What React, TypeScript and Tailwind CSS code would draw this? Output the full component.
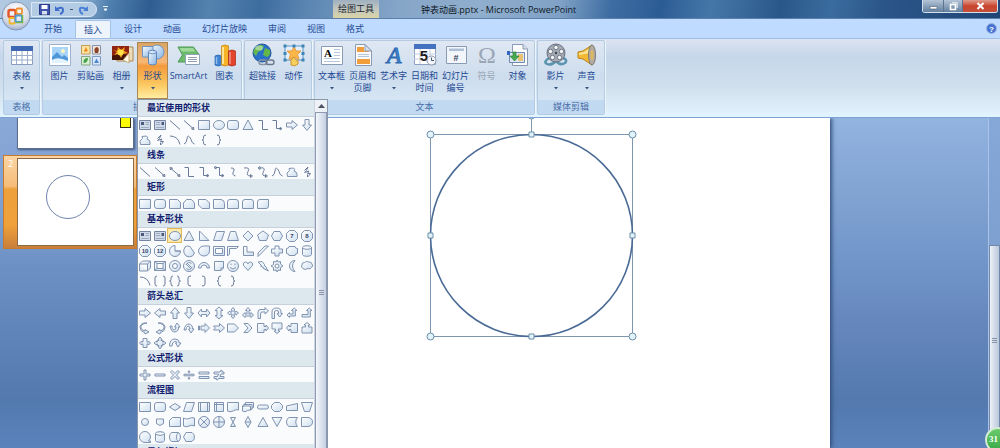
import React, { useState } from "react";

const GLYPHS: Record<string, string> = {
  rect: "M1.5 2.5H12.5V11.5H1.5Z",
  roundRect: "M4 2.5H10Q12.5 2.5 12.5 5V9Q12.5 11.5 10 11.5H4Q1.5 11.5 1.5 9V5Q1.5 2.5 4 2.5Z",
  ellipse: "M1.5 7A5.5 4.5 0 1 1 12.5 7A5.5 4.5 0 1 1 1.5 7Z",
  triangle: "M7 2L12 11.5H2Z",
  rightTriangle: "M2.5 2V11.5H12Z",
  arrowR: "M1.5 5H7V2.5L12.5 7L7 11.5V9H1.5Z",
  arrowL: "M12.5 5H7V2.5L1.5 7L7 11.5V9H12.5Z",
  arrowU: "M5 12.5V7H2.5L7 1.5L11.5 7H9V12.5Z",
  arrowD: "M5 1.5V7H2.5L7 12.5L11.5 7H9V1.5Z",
  freeform: "M2.5 11.5L2 8L4.5 5.5L4 3.5L8.5 3Q10.5 4 9 6Q11.5 6.5 12 9V11.5Z",
  snipOne: "M1.5 2.5H9.5L12.5 5.5V11.5H1.5Z",
  snipTwo: "M4.5 2.5H9.5L12.5 6V11.5H1.5V6Z",
  snipDiag: "M1.5 2.5H9L12.5 6V11.5H5L1.5 8Z",
  roundOne: "M1.5 2.5H9Q12.5 3 12.5 6.5V11.5H1.5Z",
  roundTwo: "M4 2.5H10Q12.5 2.5 12.5 5V11.5H1.5V5Q1.5 2.5 4 2.5Z",
  roundDiag: "M4 2.5H12.5V9Q12.5 11.5 10 11.5H1.5V5Q1.5 2.5 4 2.5Z",
  parallelogram: "M4.5 2.5H12.5L9.5 11.5H1.5Z",
  trapezoid: "M4.5 2.5H9.5L12.5 11.5H1.5Z",
  diamond: "M7 2L12 7L7 12L2 7Z",
  pentagon: "M7 2L12.5 6L10.5 11.5H3.5L1.5 6Z",
  hexagon: "M4 2.5H10L12.5 7L10 11.5H4L1.5 7Z",
  octagon: "M4.5 1.5H9.5L12.5 4.5V9.5L9.5 12.5H4.5L1.5 9.5V4.5Z",
  pie: "M7 7V1.5A5.5 5.5 0 1 0 12.5 7ZM7 7H12.5",
  chord: "M3 3A5 5 0 0 1 8 2.5L12.5 9A5.5 5.5 0 0 1 2 9Q1 6 3 3Z",
  teardrop: "M12.5 2V7A5.5 5 0 1 1 7 2Z",
  frame: "M1.5 2.5H12.5V11.5H1.5ZM3.5 4.5V9.5H10.5V4.5Z",
  halfFrame: "M1.5 2.5H12.5L10.5 4.5H3.5V10L1.5 12Z",
  ell: "M2.5 2.5H6V8H12.5V11.5H2.5Z",
  stripe: "M2 9L9 2H12.5L2 12.5Z",
  cross: "M5 2H9V5H12.5V9H9V12H5V9H1.5V5H5Z",
  plaque: "M4 2.5H10Q10 4.5 12.5 4.5V9.5Q10 9.5 10 11.5H4Q4 9.5 1.5 9.5V4.5Q4 4.5 4 2.5Z",
  can: "M2.5 3.5A4.5 1.8 0 0 1 11.5 3.5V10.5A4.5 1.8 0 0 1 2.5 10.5ZM2.5 3.5A4.5 1.8 0 0 0 11.5 3.5",
  cube: "M1.5 5L4.5 2H12.5V9L9.5 12H1.5ZM1.5 5H9.5V12M9.5 5L12.5 2",
  bevel: "M1.5 2.5H12.5V11.5H1.5ZM4 4.5H10V9.5H4ZM1.5 2.5L4 4.5M12.5 11.5L10 9.5M10 4.5L12.5 2.5M1.5 11.5L4 9.5",
  donut: "M1.5 7A5.5 5.5 0 1 1 12.5 7A5.5 5.5 0 1 1 1.5 7ZM4.5 7A2.5 2.5 0 1 0 9.5 7A2.5 2.5 0 1 0 4.5 7Z",
  forbid: "M1.5 7A5.5 5.5 0 1 1 12.5 7A5.5 5.5 0 1 1 1.5 7ZM4 6A3.3 3.3 0 0 1 9.5 4.5M10 8A3.3 3.3 0 0 1 4.5 9.5M4 5L9 10M5 4L10 9",
  blockArc: "M1.5 9A5.5 5.5 0 0 1 12.5 9H10A3 3 0 0 0 4 9Z",
  folded: "M2.5 2.5H11.5V9L9 11.5H2.5ZM11.5 9H9V11.5",
  smiley: "M1.5 7A5.5 5.5 0 1 1 12.5 7A5.5 5.5 0 1 1 1.5 7ZM4 8.5Q7 11.5 10 8.5M5 4.5V6M9 4.5V6",
  heart: "M7 11.5L2.5 6.5Q1.5 3.5 4.5 3Q6.5 3 7 5Q7.5 3 9.5 3Q12.5 3.5 11.5 6.5Z",
  bolt: "M2 3L6 2.5L8.5 5.5L8 6L10.5 8.5L10 9L12.5 12L7.5 9.5L8 9L4.5 7L5.5 6.5Z",
  sun: "M7 1L8 3L10.5 2.5L10.5 5L13 7L10.5 8.5L10.5 11.5L8 11L7 13L6 11L3.5 11.5L3.5 8.5L1 7L3.5 5.5L3.5 2.5L6 3ZM5 7A2 2 0 1 0 9 7A2 2 0 1 0 5 7Z",
  moon: "M10 1.5A5.5 5.5 0 1 0 10 12.5Q5 7 10 1.5Z",
  cloud: "M3 9.5Q0.5 8 2 6Q1.5 3.5 4.5 3.5Q6.5 1.5 8.5 3Q11.5 2.5 12 5Q13.5 7 11.5 8.5Q10.5 10.5 8 9.5Q5 11.5 3 9.5Z",
  arrowLR: "M1 7L4.5 3V5.5H9.5V3L13 7L9.5 11V8.5H4.5V11Z",
  arrowUD: "M7 1L11 4.5H9V9.5H11L7 13L3 9.5H5V4.5H3Z",
  quad: "M7 1.5L9 4H8V6H10V5L12.5 7L10 9V8H8V10H9L7 12.5L5 10H6V8H4V9L1.5 7L4 5V6H6V4H5Z",
  arrowLRU: "M7 1.5L9.5 4.5H8V8H10V6.5L12.5 9L10 11.5V10H4V11.5L1.5 9L4 6.5V8H6V4.5H4.5Z",
  bent: "M2 12.5V6Q2 3.5 5 3.5H9V1.5L12.5 5L9 8V6H6Q4.5 6 4.5 8V12.5Z",
  uturn: "M2 12.5V6Q2 2 6.5 2Q11 2 11 6V7.5H12.5L9.7 11L7 7.5H8.5V6Q8.5 4.5 6.5 4.5Q4.5 4.5 4.5 6V12.5Z",
  leftUp: "M2 9L4.5 6.5V8H8V4.5H6.5L9.2 2L12 4.5H10.3V10H4.5V11.5Z",
  bentUp: "M2 8.5H8V4.5H6.5L9.2 2L12 4.5H10.3V11H2Z",
  curveR: "M9 2Q2 3 3 7Q3 9 7 10V8.5L11 11L7 13V12Q1.5 10 2 6Q3 1 9 2Z",
  curveL: "M5 2Q12 3 11 7Q11 9 7 10V8.5L3 11L7 13V12Q12.5 10 12 6Q11 1 5 2Z",
  curveU: "M2 5Q3 11 7 11Q11 10 10.5 6H12L9 2L6.5 6H8Q8 9 6 9Q3 8 4 5Z",
  curveD: "M2 9Q3 3 7 3Q11 4 10.5 8H12L9 12L6.5 8H8Q8 5 6 5Q4 6 4 9Z",
  striped: "M1.5 5H2.5V9H1.5ZM4 5H8V2.5L12.5 7L8 11.5V9H4Z",
  notched: "M1.5 5H7.5V2.5L12.5 7L7.5 11.5V9H1.5L3.5 7Z",
  homePlate: "M1.5 3H8.5L12.5 7L8.5 11H1.5Z",
  chevron: "M3 2.5H7L11 7L7 11.5H3L7 7Z",
  callR: "M1.5 2.5H8V5.5H10V4L12.5 7L10 10V8.5H8V11.5H1.5Z",
  callD: "M2 2H12V8H8.5V10H10L7 12.5L4 10H5.5V8H2Z",
  callL: "M12.5 2.5H6V5.5H4V4L1.5 7L4 10V8.5H6V11.5H12.5Z",
  callU: "M2 12V6H5.5V4H4L7 1.5L10 4H8.5V6H12V12Z",
  callLR: "M1.5 7L3.5 5V6H5V2.5H9V6H10.5V5L12.5 7L10.5 9V8H9V11.5H5V8H3.5V9Z",
  callQuad: "M7 1L9 3.5H8V4.5H9.5V6H10.5V5L13 7L10.5 9V8H9.5V9.5H8V10.5H9L7 13L5 10.5H6V9.5H4.5V8H3.5V9L1 7L3.5 5V6H4.5V4.5H6V3.5H5Z",
  circular: "M1.5 10Q1.5 3 7 3Q11 3 11.5 7H13L10 11L7.5 7H9Q8.5 5 6.5 5.5Q4 6 4 10Z",
  plus: "M6 2H8V6H12V8H8V12H6V8H2V6H6Z",
  minus: "M2 6H12V8H2Z",
  times: "M4 2.5L7 5.5L10 2.5L11.5 4L8.5 7L11.5 10L10 11.5L7 8.5L4 11.5L2.5 10L5.5 7L2.5 4Z",
  divide: "M2 6.2H12V7.8H2ZM6.3 3H7.7V4.4H6.3ZM6.3 9.6H7.7V11H6.3Z",
  equal: "M2 4H12V6H2ZM2 8.5H12V10.5H2Z",
  notEqual: "M2 4H8L9 2L10.5 3L10 4H12V6H9L8 8.5H12V10.5H6.5L5.5 12L4 11.5L4.5 10.5H2V8.5H5.5L6.5 6H2Z",
  decision: "M7 3.5L12.5 7L7 10.5L1.5 7Z",
  predefined: "M1.5 2.5H12.5V11.5H1.5ZM3.5 2.5V11.5M10.5 2.5V11.5",
  internal: "M2.5 2.5H11.5V11.5H2.5ZM4.5 2.5V11.5M2.5 4.5H11.5",
  document: "M1.5 2.5H12.5V10Q10 9 7 11Q4 12.5 1.5 11Z",
  multiDoc: "M4.5 2.5H12.5V7.5L11 8V9L9.5 10Q6 10 5 11.5Q3 12 1.5 11V6H3V4H4.5ZM3 4.5H11V8.5M1.5 6H9.5V10",
  terminator: "M3.5 5H10.5Q12.5 5 12.5 7T10.5 9H3.5Q1.5 9 1.5 7T3.5 5Z",
  prep: "M4.5 2.5H9.5L12.5 5.5V8.5L9.5 11.5H4.5L1.5 8.5V5.5Z",
  manualInput: "M1.5 6L12.5 3.5V10.5H1.5Z",
  manualOp: "M1.5 2.5H12.5L9.5 11.5H4.5Z",
  connector: "M3.5 7A3.5 3.5 0 1 1 10.5 7A3.5 3.5 0 1 1 3.5 7Z",
  offPage: "M3.5 4H10.5V8.5L7 10.5L3.5 8.5Z",
  card: "M4.5 2.5H12.5V11.5H1.5V5.5Z",
  tape: "M1.5 3Q4 5 7 3.5T12.5 3V11Q10 9.5 7 11T1.5 11Z",
  summing: "M1.5 7A5.5 5.5 0 1 1 12.5 7A5.5 5.5 0 1 1 1.5 7ZM3 3L11 11M11 3L3 11",
  or: "M1.5 7A5.5 5.5 0 1 1 12.5 7A5.5 5.5 0 1 1 1.5 7ZM7 1.5V12.5M1.5 7H12.5",
  collate: "M4.5 2.5H9.5L4.5 11.5H9.5Z",
  sort: "M7 1.5L10 7L7 12.5L4 7ZM4 7H10",
  extract: "M7 2.5L12 11.5H2Z",
  merge: "M2 2.5H12L7 11.5Z",
  stored: "M4 2.5H12.5Q9 7 12.5 11.5H4Q1.5 10.5 1.5 7T4 2.5Z",
  delay: "M1.5 2.5H8Q12.5 3 12.5 7T8 11.5H1.5Z",
  sequential: "M7 1.5A5.5 5.5 0 1 0 7 12.5H12.5V11H10.5Q12.5 9 12.5 7A5.5 5.5 0 0 0 7 1.5Z",
  direct: "M3.5 2.5H10.5Q12.5 4 12.5 7T10.5 11.5H3.5Q1.5 10 1.5 7T3.5 2.5ZM10.5 2.5Q8.5 4 8.5 7T10.5 11.5",
  display: "M4 2.5H10Q12.5 4 12.5 7T10 11.5H4L1.5 7Z",
};

const STROKES: Record<string, string> = {
  line: "M2 2.5L12 11.5",
  arrow: "M2 2.5L11 10.5M12 11.5L9.5 11L11.5 9Z",
  arrowBoth: "M3 3.5L11 10.5M12 11.5L9.5 11L11.5 9ZM2 2.5L4.5 3L2.5 5Z",
  elbow: "M2.5 2.5H6.5V11.5H12",
  elbowArrow: "M2.5 2.5H6.5V10.5H11M10 9.5L12 10.5L10 12Z",
  elbowBoth: "M4 2.5H7.5V10.5H11M10 9.5L12 10.5L10 12ZM4 1.5L2 2.5L4 4Z",
  curve: "M5 3Q9.5 3 7.5 6.5T9.5 11",
  curveArrow: "M3 3Q9.5 2 7 6.5T10 11M9.5 9.5L11.5 11L9.5 12.5Z",
  curveBoth: "M4 3Q10 2 7.5 6.5T10 11M9.5 9.5L11.5 11L9.5 12.5ZM4 1.5L2 3L4 4.5Z",
  wave: "M2 11Q4.5 10.5 5 6T7.5 4T9.5 8T12.5 11",
  scribble: "M4.5 5.5L8 2L6.5 5.500L4.500 7.500L9 6L7.500 8.500L10.500 8.500L9 10.500L7.500 12V9.500",
  arc: "M2 3Q10 3 12 11.5",
  bracketL: "M9 2Q6 2 6 4V10Q6 12 9 12",
  bracketR: "M5 2Q8 2 8 4V10Q8 12 5 12",
  braceL: "M9 2Q6.5 2 6.5 4V5.5Q6.5 7 5 7Q6.5 7 6.5 8.5V10Q6.5 12 9 12",
  braceR: "M5 2Q7.5 2 7.5 4V5.5Q7.5 7 9 7Q7.5 7 7.5 8.5V10Q7.5 12 5 12",
  bracketPair: "M4 2Q2 2 2 4V10Q2 12 4 12M10 2Q12 2 12 4V10Q12 12 10 12",
  bracePair: "M5 2Q3 2 3 4V5.5Q3 7 1.5 7Q3 7 3 8.5V10Q3 12 5 12M9 2Q11 2 11 4V5.5Q11 7 12.5 7Q11 7 11 8.5V10Q11 12 9 12",
};

const sections = [
  {
    title: "最近使用的形状",
    items: "textbox vtextbox line arrow rect ellipse roundRect triangle elbow elbowArrow arrowR arrowD freeform scribble arc wave braceL braceR",
  },
  {
    title: "线条",
    items: "line arrow arrowBoth elbow elbowArrow elbowBoth curve curveArrow curveBoth wave freeform scribble",
  },
  {
    title: "矩形",
    items: "rect roundRect snipOne snipTwo snipDiag roundOne roundTwo roundTwo roundDiag",
  },
  {
    title: "基本形状",
    picked: 2,
    items: "textbox vtextbox ellipse triangle rightTriangle parallelogram trapezoid diamond pentagon hexagon poly7 poly8 poly10 poly12 pie chord teardrop frame halfFrame ell stripe cross plaque can cube bevel donut forbid blockArc folded smiley heart bolt sun moon cloud arc bracketPair bracePair bracketL bracketR braceL braceR",
  },
  {
    title: "箭头总汇",
    items: "arrowR arrowL arrowU arrowD arrowLR arrowUD quad arrowLRU bent uturn leftUp bentUp curveR curveL curveU curveD striped notched homePlate chevron callR callD callL callU callLR callQuad circular",
  },
  {
    title: "公式形状",
    items: "plus minus times divide equal notEqual",
  },
  {
    title: "流程图",
    items: "rect roundRect decision parallelogram predefined internal document multiDoc terminator prep manualInput manualOp connector offPage card tape summing or collate sort extract merge stored delay sequential can direct display",
  },
  { title: "星与旗帜", items: "" },
];

const Glyph = ({ name }: { name: string }) => {
  if (name === "textbox" || name === "vtextbox") {
    const flip = name === "vtextbox";
    return (
      <svg width="14" height="14" viewBox="0 0 14 14" fill="none">
        <path d="M1.5 2.5H12.5V11.5H1.5Z" fill="#cfd9e7" stroke="#7686a2" />
        <path d={flip ? "M3 4.5H7M3 6.5H7M3 9.5H11" : "M7.5 4.5H11M7.5 6.5H11M3 9.5H11"} stroke="#9eabc2" />
        <path d={flip ? "M8.5 4H11V7H8.5Z" : "M3 4H6V7H3Z"} fill="#4a5a7c" />
      </svg>
    );
  }
  const sides = name.startsWith("poly") ? name.slice(4) : "";
  const solid = sides ? GLYPHS.octagon : GLYPHS[name];
  return (
    <svg width="14" height="14" viewBox="0 0 14 14" strokeLinejoin="round">
      <path
        d={solid || STROKES[name]}
        fill={solid ? "url(#shapeFill)" : "none"}
        fillRule="evenodd"
        stroke={solid ? "#8093b0" : "#6a7b9a"}
        strokeWidth="1"
      />
      {sides && (
        <text x="7" y="9" textAnchor="middle" fontSize="6" fontWeight="700" fill="#33456b" fontFamily="Liberation Sans, sans-serif">
          {sides}
        </text>
      )}
    </svg>
  );
};

const Grip = () => (
  <span className="flex flex-col gap-px">
    <i className="block h-px w-[5px] bg-[#8592a8]" />
    <i className="block h-px w-[5px] bg-[#8592a8]" />
    <i className="block h-px w-[5px] bg-[#8592a8]" />
  </span>
);

const ShapeMenu = () => {
  return (
    <div className="absolute left-0 top-full z-20 flex h-[374px] w-[191px] border border-[#8a97ab] bg-[#fafbfd]">
      <svg width="0" height="0" className="absolute">
        <defs>
          <linearGradient id="shapeFill" x1="0" y1="0" x2="1" y2="1">
            <stop offset="0" stopColor="#ffffff" />
            <stop offset="1" stopColor="#cfe0f0" />
          </linearGradient>
        </defs>
      </svg>
      <div className="min-w-0 flex-1 overflow-hidden">
        {sections.map((section) => (
          <section key={section.title}>
            <h3 className="h-[17px] border-b border-[#c5d0da] bg-[#dde7ee] pl-[9px] text-[9px] font-bold leading-[16px] text-[#10206e]">
              {section.title}
            </h3>
            <div className="grid grid-cols-12">
              {section.items.split(" ").filter(Boolean).map((item, index) => (
                <button
                  key={index}
                  aria-label={item}
                  className={`flex h-[15px] items-center justify-center ${section.picked === index
                    ? "bg-[#fdeaa8] outline outline-1 -outline-offset-1 outline-[#e3b85c]"
                    : ""
                    }`}
                >
                  <Glyph name={item} />
                </button>
              ))}
            </div>
          </section>
        ))}
      </div>
      <div className="flex w-[13px] flex-col border-l border-[#cdd5e0] bg-[#eef1f6]">
        <div className="flex h-[12px] items-center justify-center">
          <svg width="7" height="4" viewBox="0 0 7 4"><path d="M3.5 0L7 4H0Z" fill="#4a5263" /></svg>
        </div>
        <div className="flex flex-1 items-center justify-center border border-[#8e9bb3] bg-linear-to-r from-[#f4f7fb] to-[#c6d0e2]">
          <Grip />
        </div>
      </div>
    </div>
  );
};

const TableIcon = () => (
  <svg width="24" height="24" viewBox="0 0 24 24">
    <path d="M1.5 3.5H22.5V21.5H1.5Z" fill="#fff" stroke="#8a9cc0" />
    <path d="M1 3H23V8H1Z" fill="#3c68b4" />
    <path d="M1 12.5H23M1 17H23M6.5 8V21M12 8V21M17.5 8V21" stroke="#9caecb" />
  </svg>
);

const PictureIcon = () => (
  <svg width="24" height="24" viewBox="0 0 24 24">
    <path d="M1.5 1.5H22.5V22.5H1.5Z" fill="#fff" stroke="#9fb2cc" />
    <path d="M4 4H20V20H4Z" fill="#a8d4f8" />
    <path d="M4 14L9 9L14 14L16 12L20 15V20H4Z" fill="#4f97d8" />
    <path d="M4 17Q10 13 20 18V20H4Z" fill="#e3f3fd" />
    <circle cx="15" cy="8" r="2" fill="#fff7c0" />
  </svg>
);

const ClipArtIcon = () => (
  <svg width="24" height="24" viewBox="0 0 24 24" strokeWidth="1">
    <path d="M2.5 2.5H11V11H2.5Z" fill="#fbe3a4" stroke="#c39c55" />
    <path d="M13.5 2.5H21.5V11H13.5Z" fill="#f2e6dc" stroke="#8994ab" />
    <path d="M2.5 13.5H11V22H2.5Z" fill="#d8efd2" stroke="#83a583" />
    <path d="M13.5 13.5H21.5V22H13.5Z" fill="#d9e9fa" stroke="#7f9bc4" />
    <path d="M5 8L7 4L9 8L6 9Z" fill="#ee8e1e" />
    <path d="M16 10Q14 5 18 4Q21 5 19 10Z" fill="#8a4428" />
    <path d="M4.5 20Q4 15 9 15Q9 20 4.5 20Z" fill="#49a04a" />
    <path d="M15 20L17.5 15.5L20 20Z" fill="#4f86cf" />
  </svg>
);

const AlbumIcon = () => (
  <svg width="24" height="24" viewBox="0 0 24 24">
    <path d="M7 4H23V18H7Z" fill="#eddcb8" stroke="#a98650" />
    <path d="M2 3H19V17H2Z" fill="#8f2411" />
    <path d="M2 13Q10 8 19 13V17H2Z" fill="#451508" />
    <path d="M3 7L7 8L8 4L11 7L15 4L14 8L18 10L13 11L11 15L9 11L4 12L7 9Z" fill="#f6a01c" />
    <circle cx="10.5" cy="9.5" r="3" fill="#fde14a" />
    <path d="M19 10L13 17L19 20Z" fill="#fffbe8" stroke="#b8935a" strokeWidth=".7" />
  </svg>
);

const ShapesIcon = () => (
  <svg width="24" height="24" viewBox="0 0 24 24">
    <defs>
      <linearGradient id="steel" x1="0" y1="0" x2="1" y2="1">
        <stop offset="0" stopColor="#f8fcff" />
        <stop offset="1" stopColor="#86b2e2" />
      </linearGradient>
    </defs>
    <circle cx="16" cy="9" r="7" fill="url(#steel)" stroke="#6d94c4" />
    <path d="M1.5 3.5H12V14H1.5Z" fill="url(#steel)" stroke="#6d94c4" />
    <path d="M7.5 9A4 1.7 0 0 1 15.5 9V20A4 1.9 0 0 1 7.5 20Z" fill="url(#steel)" stroke="#5d86ba" />
    <path d="M7.5 9A4 1.7 0 0 0 15.5 9" fill="none" stroke="#6d94c4" />
  </svg>
);

const SmartArtIcon = () => (
  <svg width="24" height="24" viewBox="0 0 24 24">
    <path d="M1 4H16.5L22 11.5L17 19H1L5.5 12Z" fill="#6cba6c" stroke="#4c9a54" />
    <path d="M2.5 5H16L18.5 8.5H4.5Z" fill="#9fda9a" />
    <path d="M8.5 11.5H22.5V21.5H8.5Z" fill="#fff" stroke="#8fa3b7" />
    <path d="M11 14.5H20M11 16.5H20M11 18.5H20" stroke="#90a0b0" />
  </svg>
);

const ChartIcon = () => (
  <svg width="24" height="24" viewBox="0 0 24 24">
    <path d="M2 13Q5 11 8.5 13V22Q5 24 2 22Z" fill="#3e83d6" stroke="#2560a8" strokeWidth=".7" />
    <path d="M8.5 3Q12 1 15.5 3V22Q12 24 8.5 22Z" fill="#f5b325" stroke="#c1800e" strokeWidth=".7" />
    <path d="M15.5 8Q19 6 22.5 8V22Q19 24 15.5 22Z" fill="#e2452b" stroke="#a62a18" strokeWidth=".7" />
    <path d="M10 4V21" stroke="#fde494" strokeWidth="2" />
    <path d="M3.5 14V21M17 9V21" stroke="#fff" strokeOpacity=".45" strokeWidth="1.5" />
  </svg>
);

const LinkIcon = () => (
  <svg width="24" height="24" viewBox="0 0 24 24" fill="none">
    <circle cx="11" cy="10" r="9" fill="#2870c8" stroke="#1d559b" />
    <path d="M4 5Q8 0 13 3L11 7L7 9L5 13L2.5 10Q2 7 4 5ZM14 5L19 7Q20 12 16 14L12 12Z" fill="#65b74a" />
    <ellipse cx="8" cy="5" rx="4" ry="2.5" fill="#fff" fillOpacity=".4" />
    <rect x="8" y="17" width="8" height="4.5" rx="2.2" stroke="#8b96a6" strokeWidth="1.6" />
    <rect x="15" y="17" width="8" height="4.5" rx="2.2" stroke="#6c7888" strokeWidth="1.4" />
  </svg>
);

const ActionIcon = () => (
  <svg width="24" height="24" viewBox="0 0 24 24">
    <path d="M3 3H21V17H3Z" fill="#e4eefa" stroke="#5796c8" />
    <path d="M12 3.5L14 8L19 8L15.5 11.5L17 16.500L12 14L7 16.500L8.500 11.500L5 8H10Z" fill="#fbb649" stroke="#e99a3a" />
    <path d="M9 17L12 14L14 17L16 18V21Q13 24 9 22Z" fill="#f7cf5c" stroke="#cf942e" />
    <path d="M1.5 1.5H4.5V4.5H1.5ZM10.5 1.5H13.5V4.5H10.5ZM19.5 1.5H22.5V4.5H19.5ZM1.5 9H4.5V12H1.5ZM19.5 9H22.5V12H19.5ZM1.5 15.5H4.5V18.5H1.5ZM19.5 15.5H22.5V18.5H19.5Z" fill="#3f83b4" />
  </svg>
);

const TextBoxIcon = () => (
  <svg width="24" height="24" viewBox="0 0 24 24">
    <path d="M1.5 3.5H22.5V21.5H1.5Z" fill="#fff" stroke="#8a9bb4" />
    <path d="M14 6.5H20M14 9.5H20M14 12.5H20M4 15.5H20M4 18.5H20" stroke="#b7c7de" />
    <text x="8" y="14" textAnchor="middle" fontSize="11" fontWeight="700" fontFamily="Liberation Serif, serif">A</text>
  </svg>
);

const HeaderIcon = () => (
  <svg width="24" height="24" viewBox="0 0 24 24">
    <path d="M4.5 1.5H14L20.5 8V22.5H4.5Z" fill="#f7f9fc" stroke="#8b9ab2" />
    <path d="M6 4H13V8H18V9H6ZM6 16H19V21H6Z" fill="#f29d3b" />
    <path d="M14 1.5V8H20.5Z" fill="#d7e1ee" stroke="#8b9ab2" />
    <path d="M7 11.5H18M7 13.5H18" stroke="#b8c5d7" />
  </svg>
);

const WordArtIcon = () => (
  <svg width="24" height="24" viewBox="0 0 24 24">
    <text x="12" y="20" textAnchor="middle" fontSize="24" fontStyle="italic" fill="#4284cc" stroke="#2f6ab2" strokeWidth="1" fontFamily="Liberation Serif, serif">A</text>
  </svg>
);

const DateIcon = () => (
  <svg width="24" height="24" viewBox="0 0 24 24">
    <path d="M1.5 1.5H22.5V21.5H1.5Z" fill="#fff" stroke="#8ea0c4" />
    <path d="M1 1H23V6H1Z" fill="#4472c0" />
    <path d="M1 11H23M1 16H23M7 6V21M17 6V21" stroke="#c3cee2" />
    <text x="11" y="18" textAnchor="middle" fontSize="15" fontWeight="700" fill="#1b1b1b" fontFamily="Liberation Sans, sans-serif">5</text>
    <circle cx="18.5" cy="17.5" r="4.5" fill="#f2f6fa" stroke="#8a96a8" />
    <path d="M18.5 14.5V17.5H21" fill="none" stroke="#4b5870" />
  </svg>
);

const NumberIcon = () => (
  <svg width="24" height="24" viewBox="0 0 24 24">
    <path d="M2.5 3.5H22.5V20.5H2.5Z" fill="#f2f6fb" stroke="#8a9bb4" />
    <path d="M5 5.5H20V8H5Z" fill="#aebfd8" />
    <text x="12" y="18" textAnchor="middle" fontSize="9" fontWeight="700" fill="#344058" fontFamily="Liberation Sans, sans-serif">#</text>
  </svg>
);

const SymbolIcon = () => (
  <svg width="24" height="24" viewBox="0 0 24 24">
    <text x="12" y="20" textAnchor="middle" fontSize="24" fill="#9ba6b5" fontFamily="Liberation Serif, serif">Ω</text>
  </svg>
);

const ObjectIcon = () => (
  <svg width="24" height="24" viewBox="0 0 24 24">
    <path d="M6.5 1.5H17L21.5 6V22.5H6.5Z" fill="#fbfcfe" stroke="#8b9ab2" />
    <path d="M17 1.5V6H21.5" fill="#d7e1ee" stroke="#8b9ab2" />
    <path d="M3.5 9.5H18.5V19.5H3.5Z" fill="#dce8f6" stroke="#7088b0" />
    <path d="M12 11H17V18H12Z" fill="#e8c173" />
    <path d="M1 8H4V12H1Z" fill="#3268bb" />
    <path d="M7 9H10V13H13L8.5 18L4 13H7Z" fill="#49a94f" stroke="#2f8438" strokeWidth=".7" />
  </svg>
);

const MovieIcon = () => (
  <svg width="24" height="24" viewBox="0 0 24 24">
    <path d="M5 15Q-1 19 3 21Q7 23 12 18Q16 23 21 20Q24 17 19 15" fill="none" stroke="#5c94b0" strokeWidth="2.5" />
    <circle cx="12" cy="10" r="9" fill="#a5abb4" stroke="#697180" />
    <g fill="#f5f8fb" stroke="#59616e" strokeWidth=".8">
      <circle cx="12" cy="4.5" r="2.2" />
      <circle cx="6.5" cy="8.5" r="2.2" />
      <circle cx="17.5" cy="8.5" r="2.2" />
      <circle cx="8.5" cy="14.5" r="2.2" />
      <circle cx="15.5" cy="14.5" r="2.2" />
    </g>
    <circle cx="12" cy="10" r="1.2" fill="#3d4552" />
  </svg>
);

const SoundIcon = () => (
  <svg width="24" height="24" viewBox="0 0 24 24">
    <path d="M3 9L8 8L17 2V22L8 16L3 15Z" fill="#f3b935" stroke="#b88418" />
    <path d="M4 10L9 9L15 5V10L4 12Z" fill="#fde593" />
    <ellipse cx="17" cy="12" rx="3.5" ry="10" fill="#b2aca4" stroke="#817a70" />
    <ellipse cx="17" cy="12" rx="1.5" ry="5" fill="#e0b95d" />
  </svg>
);

type Tool = {
  label: string;
  icon: () => React.ReactElement;
  second?: string;
  arrow?: boolean;
  wide?: boolean;
  off?: boolean;
};

const groups: { name: string; tight?: boolean; tools: Tool[] }[] = [
  { name: "表格", tools: [{ label: "表格", icon: TableIcon, arrow: true }] },
  {
    name: "插图",
    tight: true,
    tools: [
      { label: "图片", icon: PictureIcon },
      { label: "剪贴画", icon: ClipArtIcon },
      { label: "相册", icon: AlbumIcon, arrow: true },
      { label: "形状", icon: ShapesIcon, arrow: true },
      { label: "SmartArt", icon: SmartArtIcon, wide: true },
      { label: "图表", icon: ChartIcon },
    ],
  },
  {
    name: "链接",
    tools: [
      { label: "超链接", icon: LinkIcon },
      { label: "动作", icon: ActionIcon },
    ],
  },
  {
    name: "文本",
    tight: true,
    tools: [
      { label: "文本框", icon: TextBoxIcon, arrow: true },
      { label: "页眉和", second: "页脚", icon: HeaderIcon },
      { label: "艺术字", icon: WordArtIcon, arrow: true },
      { label: "日期和", second: "时间", icon: DateIcon },
      { label: "幻灯片", second: "编号", icon: NumberIcon },
      { label: "符号", icon: SymbolIcon, off: true },
      { label: "对象", icon: ObjectIcon },
    ],
  },
  {
    name: "媒体剪辑",
    tools: [
      { label: "影片", icon: MovieIcon, arrow: true },
      { label: "声音", icon: SoundIcon, arrow: true },
    ],
  },
];

const tabs = ["开始", "插入", "设计", "动画", "幻灯片放映", "审阅", "视图", "格式"];

const TitleBar = () => (
  <header className="flex h-[18px] items-start bg-[linear-gradient(100deg,#b3cbe2_0%,#8fb0d0_8%,#4f7fae_11%,#2f5d92_15%,#5583af_21%,#3d6c9f_26%,#5c87b3_31%,#86a6c8_40%,#90aecd_48%,#7fa1c5_56%,#3d6da2_61%,#2c5c94_66%,#4677a9_71%,#2a5789_78%,#3b6c9f_83%,#2b568a_88%,#1f4576_100%)]">
    <div className="ml-[31px] mt-[2px] flex h-[15px] w-[66px] items-center gap-[5px] rounded-r-full border border-[#dbe8f6] bg-[#b4cbe4] pl-[7px]">
      <button aria-label="保存">
        <svg width="11" height="11" viewBox="0 0 11 11">
          <path d="M.5 .5H10.5V10.5H.5Z" fill="#3f55ae" stroke="#2a3a85" />
          <path d="M2.5 1H8.5V5H2.5Z" fill="#fff" />
          <path d="M3 7H8V10.5H3Z" fill="#d7deee" />
        </svg>
      </button>
      <button aria-label="撤消">
        <svg width="10" height="10" viewBox="0 0 10 10" fill="none">
          <path d="M2 4Q8 1 8 5Q8 8 5 9" stroke="#3f6fcb" strokeWidth="2" />
          <path d="M0 1V6H5Z" fill="#3f6fcb" />
        </svg>
      </button>
      <i className="block h-px w-[3px] bg-[#43567e]" />
      <button aria-label="恢复">
        <svg width="10" height="10" viewBox="0 0 10 10" fill="none">
          <path d="M8 4Q1 1 2 5Q2 8 5 9" stroke="#4a80d4" strokeWidth="2" />
          <path d="M10 1V6H5Z" fill="#4a80d4" />
        </svg>
      </button>
    </div>
    <svg width="5" height="6" viewBox="0 0 5 6" className="ml-[6px] mt-[6px]">
      <path d="M0 .5H5M1 3H4L2.5 5Z" stroke="#e4edf7" fill="#e4edf7" />
    </svg>
    <div className="ml-[225px] h-full w-[46px] bg-linear-to-b from-[#9fb0bf] via-[#c3c8bf] to-[#d9d3a4] text-center text-[9px] leading-[18px] text-[#1c2733]">
      绘图工具
    </div>
    <h1 className="ml-[42px] text-[9px] leading-[20px] text-[#0d1826]">钟表动画.pptx - Microsoft PowerPoint</h1>
    <div className="ml-auto mr-[2px] flex h-[13px] overflow-hidden rounded-b-[3px] border border-t-0 border-[#d5e0ec]">
      <button aria-label="最小化" className="flex w-[21px] items-center justify-center border-r border-[#5c7593] bg-linear-to-b from-[#b4c4d6] to-[#63809f]">
        <svg width="9" height="8" viewBox="0 0 9 8"><path d="M1 4.5H8V7H1Z" fill="#fff" stroke="#4a5a70" strokeWidth=".6" /></svg>
      </button>
      <button aria-label="还原" className="flex w-[19px] items-center justify-center border-r border-[#5c7593] bg-linear-to-b from-[#b4c4d6] to-[#63809f]">
        <svg width="9" height="9" viewBox="0 0 9 9" fill="none">
          <path d="M3 .8H8.2V6" stroke="#eef3f8" />
          <path d="M1.5 2.5H6.5V7.5H1.5Z" stroke="#fff" strokeWidth="1.6" />
        </svg>
      </button>
      <button aria-label="关闭" className="flex w-[34px] items-center justify-center bg-linear-to-b from-[#dd9a8c] via-[#c8442e] to-[#c4503a]">
        <svg width="9" height="8" viewBox="0 0 9 8"><path d="M1.5 1L7.5 7M7.5 1L1.5 7" stroke="#fff" strokeWidth="2" /></svg>
      </button>
    </div>
  </header>
);

const OfficeButton = () => (
  <button aria-label="Office" className="absolute left-[1px] top-[1px] z-10">
    <svg width="30" height="30" viewBox="0 0 30 30" fill="none">
      <defs>
        <radialGradient id="orb" cx=".5" cy=".3" r=".7">
          <stop offset="0" stopColor="#ffffff" />
          <stop offset=".7" stopColor="#d5dce8" />
          <stop offset="1" stopColor="#a3b1c9" />
        </radialGradient>
      </defs>
      <circle cx="15" cy="15" r="14" fill="url(#orb)" stroke="#8195b5" />
      <rect x="7.5" y="9" width="7" height="7" rx="1.5" stroke="#e3562b" strokeWidth="2.4" />
      <rect x="15.5" y="7.5" width="5.5" height="5.5" rx="1" stroke="#f0902e" strokeWidth="1.8" />
      <rect x="8.5" y="17" width="5.5" height="5.5" rx="1" stroke="#f4b52c" strokeWidth="1.8" />
      <rect x="14.5" y="14.5" width="6.5" height="6.5" rx="1" stroke="#4a9bd8" strokeWidth="2" />
      <path d="M21.5 14V21.5H15" stroke="#78b548" strokeWidth="1.5" />
    </svg>
  </button>
);

const ToolButton = ({ tool, active, onClick }: { tool: Tool; active?: boolean; onClick?: () => void }) => {
  const Icon = tool.icon;
  return (
    <button
      onClick={onClick}
      className={`flex h-[57px] flex-col items-center pt-px text-[9px] leading-[12px] whitespace-nowrap ${tool.wide ? "w-[41px]" : "w-[31px]"} ${tool.off ? "text-[#98a3b3]" : "text-[#1f4a94]"} ${active
        ? "bg-[linear-gradient(#d9a463,#f8b877_35%,#f39a3c_42%,#fbc861_75%,#fff0a8)] outline outline-1 -outline-offset-1 outline-[#a98553]"
        : ""
        }`}
    >
      <Icon />
      <span className="mt-[3px]">{tool.label}</span>
      {tool.second && <span>{tool.second}</span>}
      {tool.arrow && (
        <svg width="4" height="12" viewBox="0 0 4 12"><path d="M0 5H4L2 7.5Z" fill="#35517e" /></svg>
      )}
    </button>
  );
};

const Ribbon = () => {
  const [open, setOpen] = useState(true);

  return (
    <div className="flex h-[80px] gap-[2px] border-y border-t-[#9dbfe8] border-b-[#7ea3d3] bg-[linear-gradient(#dce3f1,#c6d7eb_22%,#d0dfec_60%,#e2f4ff)] pl-[3px] pt-px">
      {groups.map((group) => (
        <div
          key={group.name}
          className="flex h-[75px] flex-col rounded-[2px] border border-[#b5cbe2] bg-linear-to-b from-[#dfe7f3] via-[#cddded] to-[#dbeaf8] shadow-[1px_0_0_#eef6fd]"
        >
          <div className={`flex h-[59px] pt-px ${group.tight ? "px-px" : "px-[2px]"}`}>
            {group.tools.map((tool) =>
              tool.label === "形状" ? (
                <div key={tool.label} className="relative h-[57px]">
                  <ToolButton tool={tool} active={open} onClick={() => setOpen(!open)} />
                  {open && <ShapeMenu />}
                </div>
              ) : (
                <ToolButton key={tool.label} tool={tool} />
              )
            )}
          </div>
          <div className="h-[14px] bg-[#c1d9f1] text-center text-[9px] leading-[14px] text-[#4a6fa8]">{group.name}</div>
        </div>
      ))}
    </div>
  );
};

const SlidePane = () => (
  <aside className="w-[137px] shrink-0 overflow-hidden bg-[linear-gradient(#8aa8d8,#7d9fd0_30%,#6d90c4_45%,#5379af_85%,#5b83bb)] pl-[3px]">
    <div className="flex justify-end pr-[3px]">
      <div className="flex h-[31px] w-[117px] items-start justify-end border border-t-0 border-[#5d6f8c] bg-white pr-[2px] shadow-[1px_1px_2px_#3d5580]">
        <div className="h-[10px] w-[11px] border border-t-0 border-[#33331a] bg-[#ffff00]" />
      </div>
    </div>
    <div className="mt-[6px] flex h-[94px] justify-between border border-[#c97b2c] bg-[linear-gradient(#fbd5a4,#f6bc78_33%,#eda03c_36%,#f0a13b_75%,#c97f3a)] pl-[4px] pr-[2px] pt-[2px]">
      <span className="text-[9px] leading-[12px] text-white">2</span>
      <div className="h-[88px] w-[117px] border border-[#8b6a45] bg-white">
        <svg width="115" height="86" viewBox="0 0 115 86">
          <circle cx="50" cy="38" r="21.5" fill="none" stroke="#7184ad" />
        </svg>
      </div>
    </div>
  </aside>
);

const Canvas = () => (
  <main className="flex min-w-0 flex-1 overflow-hidden bg-[linear-gradient(#93b3e0,#7fa2d1_25%,#7094c8_45%,#6788bf_60%,#5379af_86%,#5b83bb)]">
    <div className="min-w-0 flex-1 bg-white pl-[285px] shadow-[2px_0_4px_#33507d]">
      <svg width="220" height="226" viewBox="0 0 220 226" fill="none">
        <path d="M109.5 0V16M8.5 16.5H210.5V218.5H8.5Z" stroke="#7d97b0" />
        <circle cx="109.5" cy="117.5" r="101" stroke="#4a6a96" strokeWidth="1.6" />
        <g fill="#e3f3fa" stroke="#6c8ea9">
          <circle cx="109.5" cy="-2" r="3" />
          <circle cx="8.5" cy="16.5" r="3.5" />
          <circle cx="210.5" cy="16.5" r="3.5" />
          <circle cx="8.5" cy="218.5" r="3.5" />
          <circle cx="210.5" cy="218.5" r="3.5" />
          <path d="M107 14H112V19H107ZM107 216H112V221H107ZM6 115H11V120H6ZM208 115H213V120H208Z" />
        </g>
      </svg>
    </div>
    <div className="w-[158px] shrink-0" />
    <div className="flex w-[12px] shrink-0 flex-col justify-end border-l border-[#a9c4e8] bg-linear-to-b from-[#86a8d8] to-[#6f93c6] pb-[13px]">
      <div className="flex h-[190px] items-center justify-center border border-[#7388a8] bg-linear-to-r from-[#edf1f7] to-[#bac7dc]">
        <Grip />
      </div>
    </div>
  </main>
);

const App = () => {
  return (
    <div className="relative flex h-screen flex-col overflow-hidden bg-[#5b83bb] font-['Open_Sans','Noto_Sans_CJK_SC',sans-serif]">
      <TitleBar />
      <OfficeButton />
      <nav className="flex h-[20px] items-end gap-[5px] border-t border-[#5d80ab] bg-[#bfdbff] pl-[36px]">
        {tabs.map((tab) => (
          <button
            key={tab}
            className={`h-[18px] rounded-t-[2px] px-[8px] text-[9px] leading-[16px] text-[#1f4a94] ${tab === "插入" ? "border border-b-0 border-[#a3c2e8] bg-[#eef4fc] px-[7px]" : ""}`}
          >
            {tab}
          </button>
        ))}
        <button aria-label="帮助" className="ml-auto mr-[3px] mb-[4px]">
          <svg width="11" height="11" viewBox="0 0 11 11">
            <circle cx="5.5" cy="5.5" r="5" fill="#4573cf" stroke="#9db7e6" />
            <text x="5.5" y="8.5" textAnchor="middle" fontSize="8" fontWeight="700" fill="#fff" fontFamily="Liberation Sans, sans-serif">?</text>
          </svg>
        </button>
      </nav>
      <Ribbon />
      <div className="flex min-h-0 flex-1">
        <SlidePane />
        <Canvas />
      </div>
      <div className="absolute -right-[11px] bottom-[-5px] flex h-[26px] w-[26px] items-center rounded-full border-2 border-[#d5ecd5] bg-linear-to-b from-[#6bcb6b] to-[#35a845] pl-[2px] font-['Liberation_Serif',serif] text-[9px] font-bold text-white">
        31
      </div>
    </div>
  );
};

export default App;
